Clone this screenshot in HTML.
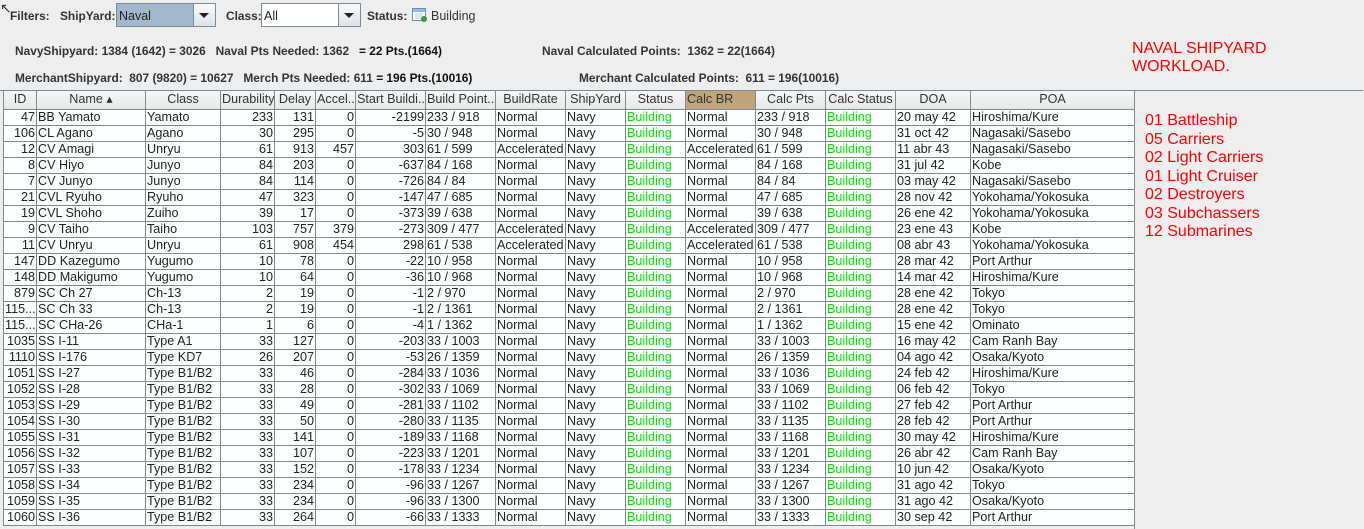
<!DOCTYPE html>
<html><head><meta charset="utf-8"><style>
body{margin:0;width:1364px;height:529px;background:#eeeeee;font-family:"Liberation Sans",Arial,sans-serif;font-size:12px;color:#333;position:relative;overflow:hidden}
.a{position:absolute;white-space:nowrap}
.b{font-weight:bold;font-size:11.9px;color:#333}
.combo{position:absolute;height:24px;border:1px solid #7a8a99;box-sizing:border-box}
.combo .t{position:absolute;left:2px;top:5px;font-size:12.5px;color:#222}
.combo .btn{position:absolute;right:0;top:0;width:21px;height:22px;border-left:1px solid #7a8a99;background:linear-gradient(#fafafa,#dde2e8)}
.combo .btn:after{content:"";position:absolute;left:5px;top:9px;border-left:5px solid transparent;border-right:5px solid transparent;border-top:5px solid #222}
#tbl{position:absolute;left:3px;top:91px;width:1131px;border-collapse:collapse;table-layout:fixed;background:#fff;border-left:1px solid #7a8a99}
#tbl td,#tbl th{height:15px;padding:0 1px;border-right:1px solid #7a8a99;border-bottom:1px solid #7a8a99;overflow:hidden;white-space:nowrap;font-size:12.6px;line-height:15px;color:#222;font-weight:normal}
#tbl th{background:linear-gradient(#f6f6f6,#e8e8e8);color:#333;text-align:center}
#tbl th.cb{background:#bfa47c;text-align:left}
#tbl td.r{text-align:right}
#tbl td.g{color:#00e600}
.red{color:#ff0000;font-size:16px;line-height:18.5px}
</style></head><body>
<div class="a" style="left:0;top:0;font-size:14px">&#8598;</div>
<div class="a b" style="left:10px;top:9px">Filters:</div>
<div class="a b" style="left:60px;top:9px">ShipYard:</div>
<div class="combo" style="left:116px;top:3px;width:100px;background:#a3b8cc"><span class="t">Naval</span><div class="btn"></div></div>
<div class="a b" style="left:226px;top:9px">Class:</div>
<div class="combo" style="left:261px;top:3px;width:100px;background:#fff"><span class="t">All</span><div class="btn"></div></div>
<div class="a b" style="left:367px;top:9px">Status:</div>
<svg class="a" style="left:412px;top:8px" width="16" height="15" viewBox="0 0 16 15"><rect x="0.5" y="0.5" width="13" height="12" fill="#fff" stroke="#6a8cc0"/><rect x="1" y="1" width="12" height="3" fill="#9cb6de"/><path d="M3 6h8M3 8h8M3 10h6" stroke="#b8c8e0"/><circle cx="12" cy="11" r="3" fill="#3a9a3a"/></svg>
<div class="a" style="left:431px;top:9px;color:#333;font-size:12.5px">Building</div>
<div class="a b" style="left:15px;top:44px">NavyShipyard: 1384 (1642) = 3026 &nbsp;&nbsp;Naval Pts Needed: 1362 &nbsp; <span style="color:#111">= 22 Pts.(1664)</span></div>
<div class="a b" style="left:15px;top:71px">MerchantShipyard: &nbsp;807 (9820) = 10627 &nbsp;&nbsp;Merch Pts Needed: 611 <span style="color:#111">= 196 Pts.(10016)</span></div>
<div class="a b" style="left:542px;top:44px">Naval Calculated Points: &nbsp;1362 = 22(1664)</div>
<div class="a b" style="left:579px;top:71px">Merchant Calculated Points: &nbsp;611 = 196(10016)</div>
<div class="a red" style="left:1132px;top:40px;line-height:18px">NAVAL SHIPYARD<br>WORKLOAD.</div>
<div class="a" style="left:1134px;top:90px;width:229px;height:439px;border-top:1px solid #7a8a99;border-left:1px solid #7a8a99;box-sizing:border-box"></div>
<div class="a" style="left:0;top:90px;width:1134px;border-top:1px solid #7a8a99"></div>
<div class="a red" style="left:1145px;top:112px">01 Battleship<br>05 Carriers<br>02 Light Carriers<br>01 Light Cruiser<br>02 Destroyers<br>03 Subchassers<br>12 Submarines</div>
<table id="tbl">
<colgroup><col style="width:33px"><col style="width:109px"><col style="width:75px"><col style="width:54px"><col style="width:41px"><col style="width:40px"><col style="width:70px"><col style="width:70px"><col style="width:70px"><col style="width:60px"><col style="width:60px"><col style="width:70px"><col style="width:70px"><col style="width:70px"><col style="width:75px"><col style="width:164px"></colgroup>
<tr style="height:18px"><th style="height:17px">ID</th><th>Name &#9652;</th><th>Class</th><th>Durability</th><th>Delay</th><th>Accel...</th><th>Start Buildi...</th><th>Build Point...</th><th>BuildRate</th><th>ShipYard</th><th>Status</th><th class="cb">Calc BR</th><th>Calc Pts</th><th>Calc Status</th><th>DOA</th><th>POA</th></tr>
<tr><td class="r">47</td><td>BB Yamato</td><td>Yamato</td><td class="r">233</td><td class="r">131</td><td class="r">0</td><td class="r">-2199</td><td>233 / 918</td><td>Normal</td><td>Navy</td><td class="g">Building</td><td>Normal</td><td>233 / 918</td><td class="g">Building</td><td>20 may 42</td><td>Hiroshima/Kure</td></tr>
<tr><td class="r">106</td><td>CL Agano</td><td>Agano</td><td class="r">30</td><td class="r">295</td><td class="r">0</td><td class="r">-5</td><td>30 / 948</td><td>Normal</td><td>Navy</td><td class="g">Building</td><td>Normal</td><td>30 / 948</td><td class="g">Building</td><td>31 oct 42</td><td>Nagasaki/Sasebo</td></tr>
<tr><td class="r">12</td><td>CV Amagi</td><td>Unryu</td><td class="r">61</td><td class="r">913</td><td class="r">457</td><td class="r">303</td><td>61 / 599</td><td>Accelerated</td><td>Navy</td><td class="g">Building</td><td>Accelerated</td><td>61 / 599</td><td class="g">Building</td><td>11 abr 43</td><td>Nagasaki/Sasebo</td></tr>
<tr><td class="r">8</td><td>CV Hiyo</td><td>Junyo</td><td class="r">84</td><td class="r">203</td><td class="r">0</td><td class="r">-637</td><td>84 / 168</td><td>Normal</td><td>Navy</td><td class="g">Building</td><td>Normal</td><td>84 / 168</td><td class="g">Building</td><td>31 jul 42</td><td>Kobe</td></tr>
<tr><td class="r">7</td><td>CV Junyo</td><td>Junyo</td><td class="r">84</td><td class="r">114</td><td class="r">0</td><td class="r">-726</td><td>84 / 84</td><td>Normal</td><td>Navy</td><td class="g">Building</td><td>Normal</td><td>84 / 84</td><td class="g">Building</td><td>03 may 42</td><td>Nagasaki/Sasebo</td></tr>
<tr><td class="r">21</td><td>CVL Ryuho</td><td>Ryuho</td><td class="r">47</td><td class="r">323</td><td class="r">0</td><td class="r">-147</td><td>47 / 685</td><td>Normal</td><td>Navy</td><td class="g">Building</td><td>Normal</td><td>47 / 685</td><td class="g">Building</td><td>28 nov 42</td><td>Yokohama/Yokosuka</td></tr>
<tr><td class="r">19</td><td>CVL Shoho</td><td>Zuiho</td><td class="r">39</td><td class="r">17</td><td class="r">0</td><td class="r">-373</td><td>39 / 638</td><td>Normal</td><td>Navy</td><td class="g">Building</td><td>Normal</td><td>39 / 638</td><td class="g">Building</td><td>26 ene 42</td><td>Yokohama/Yokosuka</td></tr>
<tr><td class="r">9</td><td>CV Taiho</td><td>Taiho</td><td class="r">103</td><td class="r">757</td><td class="r">379</td><td class="r">-273</td><td>309 / 477</td><td>Accelerated</td><td>Navy</td><td class="g">Building</td><td>Accelerated</td><td>309 / 477</td><td class="g">Building</td><td>23 ene 43</td><td>Kobe</td></tr>
<tr><td class="r">11</td><td>CV Unryu</td><td>Unryu</td><td class="r">61</td><td class="r">908</td><td class="r">454</td><td class="r">298</td><td>61 / 538</td><td>Accelerated</td><td>Navy</td><td class="g">Building</td><td>Accelerated</td><td>61 / 538</td><td class="g">Building</td><td>08 abr 43</td><td>Yokohama/Yokosuka</td></tr>
<tr><td class="r">147</td><td>DD Kazegumo</td><td>Yugumo</td><td class="r">10</td><td class="r">78</td><td class="r">0</td><td class="r">-22</td><td>10 / 958</td><td>Normal</td><td>Navy</td><td class="g">Building</td><td>Normal</td><td>10 / 958</td><td class="g">Building</td><td>28 mar 42</td><td>Port Arthur</td></tr>
<tr><td class="r">148</td><td>DD Makigumo</td><td>Yugumo</td><td class="r">10</td><td class="r">64</td><td class="r">0</td><td class="r">-36</td><td>10 / 968</td><td>Normal</td><td>Navy</td><td class="g">Building</td><td>Normal</td><td>10 / 968</td><td class="g">Building</td><td>14 mar 42</td><td>Hiroshima/Kure</td></tr>
<tr><td class="r">879</td><td>SC Ch 27</td><td>Ch-13</td><td class="r">2</td><td class="r">19</td><td class="r">0</td><td class="r">-1</td><td>2 / 970</td><td>Normal</td><td>Navy</td><td class="g">Building</td><td>Normal</td><td>2 / 970</td><td class="g">Building</td><td>28 ene 42</td><td>Tokyo</td></tr>
<tr><td class="r">115...</td><td>SC Ch 33</td><td>Ch-13</td><td class="r">2</td><td class="r">19</td><td class="r">0</td><td class="r">-1</td><td>2 / 1361</td><td>Normal</td><td>Navy</td><td class="g">Building</td><td>Normal</td><td>2 / 1361</td><td class="g">Building</td><td>28 ene 42</td><td>Tokyo</td></tr>
<tr><td class="r">115...</td><td>SC CHa-26</td><td>CHa-1</td><td class="r">1</td><td class="r">6</td><td class="r">0</td><td class="r">-4</td><td>1 / 1362</td><td>Normal</td><td>Navy</td><td class="g">Building</td><td>Normal</td><td>1 / 1362</td><td class="g">Building</td><td>15 ene 42</td><td>Ominato</td></tr>
<tr><td class="r">1035</td><td>SS I-11</td><td>Type A1</td><td class="r">33</td><td class="r">127</td><td class="r">0</td><td class="r">-203</td><td>33 / 1003</td><td>Normal</td><td>Navy</td><td class="g">Building</td><td>Normal</td><td>33 / 1003</td><td class="g">Building</td><td>16 may 42</td><td>Cam Ranh Bay</td></tr>
<tr><td class="r">1110</td><td>SS I-176</td><td>Type KD7</td><td class="r">26</td><td class="r">207</td><td class="r">0</td><td class="r">-53</td><td>26 / 1359</td><td>Normal</td><td>Navy</td><td class="g">Building</td><td>Normal</td><td>26 / 1359</td><td class="g">Building</td><td>04 ago 42</td><td>Osaka/Kyoto</td></tr>
<tr><td class="r">1051</td><td>SS I-27</td><td>Type B1/B2</td><td class="r">33</td><td class="r">46</td><td class="r">0</td><td class="r">-284</td><td>33 / 1036</td><td>Normal</td><td>Navy</td><td class="g">Building</td><td>Normal</td><td>33 / 1036</td><td class="g">Building</td><td>24 feb 42</td><td>Hiroshima/Kure</td></tr>
<tr><td class="r">1052</td><td>SS I-28</td><td>Type B1/B2</td><td class="r">33</td><td class="r">28</td><td class="r">0</td><td class="r">-302</td><td>33 / 1069</td><td>Normal</td><td>Navy</td><td class="g">Building</td><td>Normal</td><td>33 / 1069</td><td class="g">Building</td><td>06 feb 42</td><td>Tokyo</td></tr>
<tr><td class="r">1053</td><td>SS I-29</td><td>Type B1/B2</td><td class="r">33</td><td class="r">49</td><td class="r">0</td><td class="r">-281</td><td>33 / 1102</td><td>Normal</td><td>Navy</td><td class="g">Building</td><td>Normal</td><td>33 / 1102</td><td class="g">Building</td><td>27 feb 42</td><td>Port Arthur</td></tr>
<tr><td class="r">1054</td><td>SS I-30</td><td>Type B1/B2</td><td class="r">33</td><td class="r">50</td><td class="r">0</td><td class="r">-280</td><td>33 / 1135</td><td>Normal</td><td>Navy</td><td class="g">Building</td><td>Normal</td><td>33 / 1135</td><td class="g">Building</td><td>28 feb 42</td><td>Port Arthur</td></tr>
<tr><td class="r">1055</td><td>SS I-31</td><td>Type B1/B2</td><td class="r">33</td><td class="r">141</td><td class="r">0</td><td class="r">-189</td><td>33 / 1168</td><td>Normal</td><td>Navy</td><td class="g">Building</td><td>Normal</td><td>33 / 1168</td><td class="g">Building</td><td>30 may 42</td><td>Hiroshima/Kure</td></tr>
<tr><td class="r">1056</td><td>SS I-32</td><td>Type B1/B2</td><td class="r">33</td><td class="r">107</td><td class="r">0</td><td class="r">-223</td><td>33 / 1201</td><td>Normal</td><td>Navy</td><td class="g">Building</td><td>Normal</td><td>33 / 1201</td><td class="g">Building</td><td>26 abr 42</td><td>Cam Ranh Bay</td></tr>
<tr><td class="r">1057</td><td>SS I-33</td><td>Type B1/B2</td><td class="r">33</td><td class="r">152</td><td class="r">0</td><td class="r">-178</td><td>33 / 1234</td><td>Normal</td><td>Navy</td><td class="g">Building</td><td>Normal</td><td>33 / 1234</td><td class="g">Building</td><td>10 jun 42</td><td>Osaka/Kyoto</td></tr>
<tr><td class="r">1058</td><td>SS I-34</td><td>Type B1/B2</td><td class="r">33</td><td class="r">234</td><td class="r">0</td><td class="r">-96</td><td>33 / 1267</td><td>Normal</td><td>Navy</td><td class="g">Building</td><td>Normal</td><td>33 / 1267</td><td class="g">Building</td><td>31 ago 42</td><td>Tokyo</td></tr>
<tr><td class="r">1059</td><td>SS I-35</td><td>Type B1/B2</td><td class="r">33</td><td class="r">234</td><td class="r">0</td><td class="r">-96</td><td>33 / 1300</td><td>Normal</td><td>Navy</td><td class="g">Building</td><td>Normal</td><td>33 / 1300</td><td class="g">Building</td><td>31 ago 42</td><td>Osaka/Kyoto</td></tr>
<tr><td class="r">1060</td><td>SS I-36</td><td>Type B1/B2</td><td class="r">33</td><td class="r">264</td><td class="r">0</td><td class="r">-66</td><td>33 / 1333</td><td>Normal</td><td>Navy</td><td class="g">Building</td><td>Normal</td><td>33 / 1333</td><td class="g">Building</td><td>30 sep 42</td><td>Port Arthur</td></tr>
</table>
</body></html>
